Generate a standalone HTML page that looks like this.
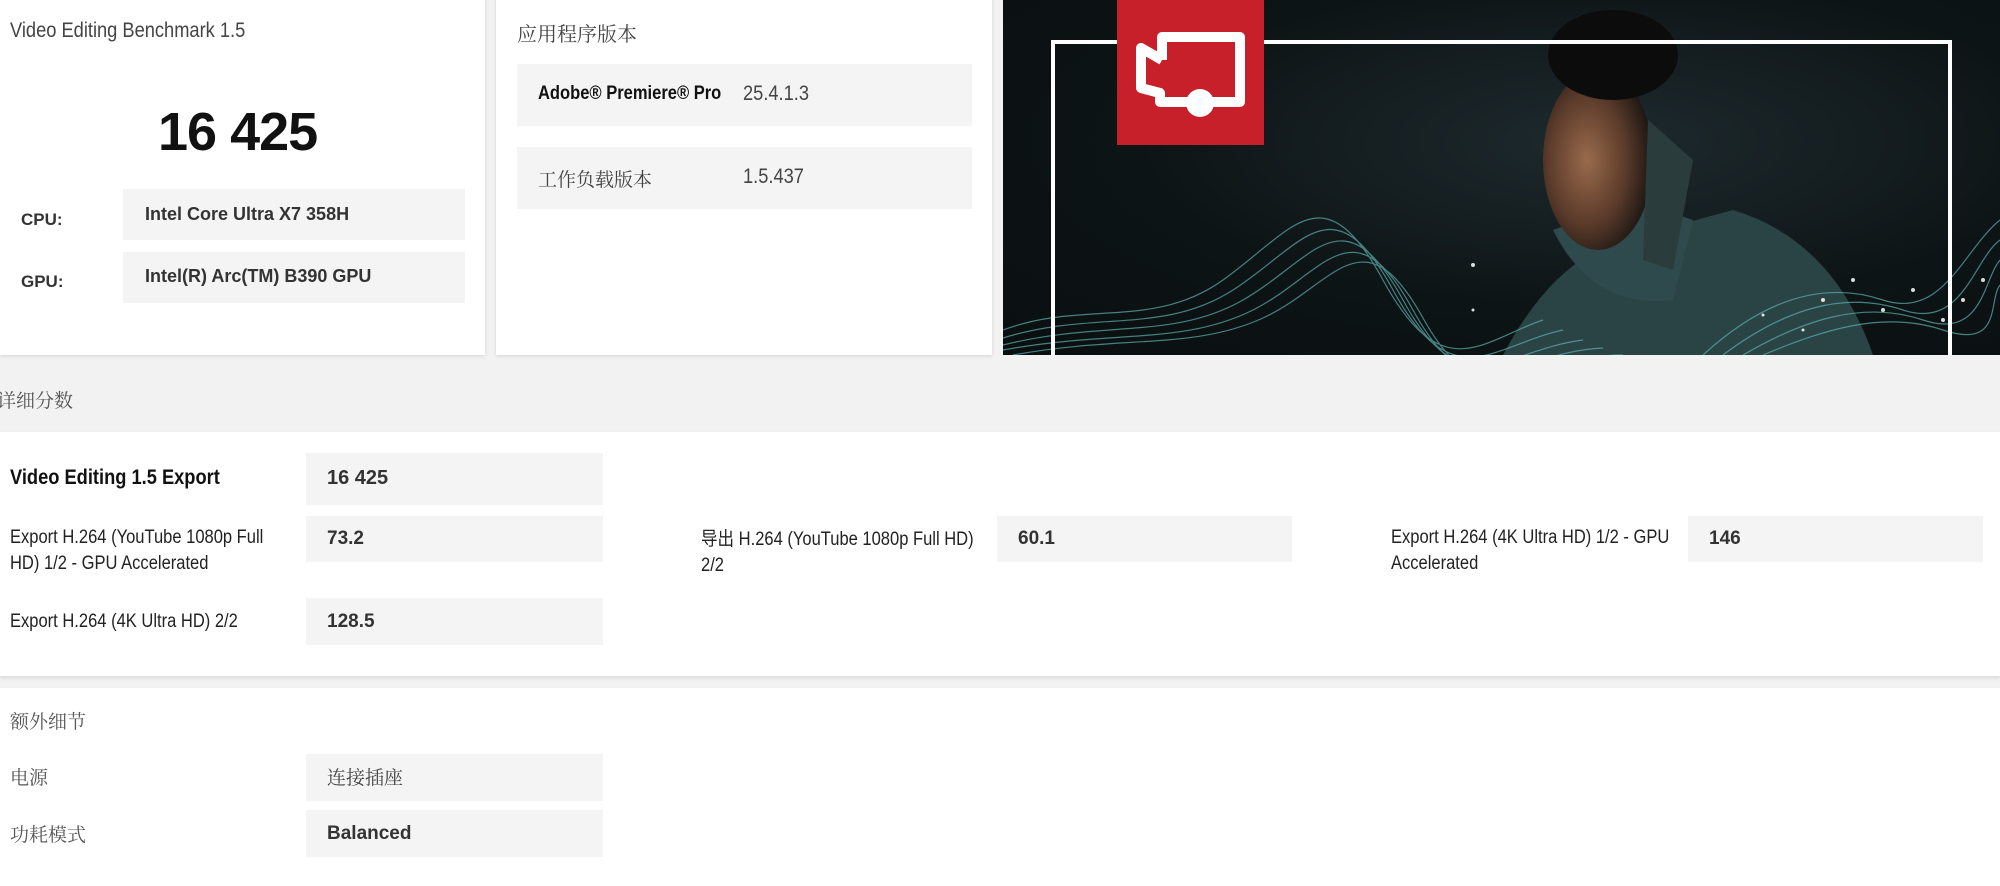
<!DOCTYPE html>
<html><head><meta charset="utf-8"><style>
*{margin:0;padding:0;box-sizing:border-box}
body{width:2000px;height:886px;overflow:hidden;background:#f2f2f2;font-family:"Liberation Sans","Noto Sans CJK SC",sans-serif;color:#222;position:relative}
.abs{position:absolute}
.card{position:absolute;background:#fff;box-shadow:0 1px 4px rgba(0,0,0,.12)}
.box{position:absolute;background:#f4f4f4}
.t{position:absolute;white-space:nowrap}
.n{transform:scaleX(0.87);transform-origin:0 0}
.lbl{font-size:19px;color:#222;line-height:26px}
.val{font-family:"Liberation Sans",sans-serif;font-weight:bold;font-size:19px;color:#333}
.cjk{font-family:"Noto Serif CJK SC","Noto Sans CJK SC",serif;font-size:19px;color:#444}
</style></head><body>
<div class="card" style="left:0;top:-4px;width:485px;height:359px"></div>
<div class="t n" style="left:10px;top:19px;font-size:21px;color:#444">Video Editing Benchmark 1.5</div>
<div class="t" style="left:158px;top:101px;font-family:'Liberation Sans',sans-serif;font-weight:bold;font-size:54px;color:#111;letter-spacing:-1px">16 425</div>
<div class="t" style="left:21px;top:210px;font-weight:bold;font-size:17px;color:#333">CPU:</div>
<div class="box" style="left:123px;top:189px;width:342px;height:51px"></div>
<div class="t val" style="left:145px;top:204px;font-size:18px">Intel Core Ultra X7 358H</div>
<div class="t" style="left:21px;top:272px;font-weight:bold;font-size:17px;color:#333">GPU:</div>
<div class="box" style="left:123px;top:252px;width:342px;height:51px"></div>
<div class="t val" style="left:145px;top:266px;font-size:18px">Intel(R) Arc(TM) B390 GPU</div>

<div class="card" style="left:496px;top:-4px;width:496px;height:359px"></div>
<div class="t cjk" style="left:517px;top:18px;font-size:20px">应用程序版本</div>
<div class="box" style="left:517px;top:64px;width:455px;height:62px"></div>
<div class="t n" style="left:538px;top:83px;font-weight:bold;font-size:19px;color:#111">Adobe® Premiere® Pro</div>
<div class="t n" style="left:743px;top:82px;font-size:21px;color:#444">25.4.1.3</div>
<div class="box" style="left:517px;top:147px;width:455px;height:62px"></div>
<div class="t cjk" style="left:538px;top:165px">工作负载版本</div>
<div class="t n" style="left:743px;top:165px;font-size:21px;color:#444">1.5.437</div>

<div class="abs" style="left:1003px;top:0;width:997px;height:355px;background:radial-gradient(ellipse at 60% 40%,#1e2a2e 0%,#0d1416 55%,#0a0f11 100%);overflow:hidden">
<svg width="997" height="355" style="position:absolute;left:0;top:0">
<defs><radialGradient id="f" cx="0.4" cy="0.5" r="0.6"><stop offset="0" stop-color="#9a6a4c"/><stop offset="0.6" stop-color="#5a3a2a"/><stop offset="1" stop-color="#1a1512"/></radialGradient></defs>
<path d="M500 355 Q550 260 620 240 L730 210 Q830 240 870 355Z" fill="#2a4446"/>
<path d="M550 230 Q590 310 670 300 L690 220 L630 200Z" fill="#2f4a4c"/>
<ellipse cx="595" cy="160" rx="55" ry="90" fill="url(#f)"/>
<ellipse cx="610" cy="55" rx="65" ry="45" fill="#0c0c0c"/>
<path d="M645 120 L690 160 L670 270 L640 260Z" fill="#2a3c3c"/>
<g fill="none" stroke="#5fb0b0" stroke-width="1.2" opacity="0.7">
<path d="M0 330 C80 300 150 330 220 280 S320 170 380 280 S480 340 540 320"/>
<path d="M0 338 C90 310 160 335 230 290 S330 180 390 290 S490 345 560 330"/>
<path d="M0 345 C100 320 170 340 240 300 S340 190 400 300 S500 350 580 340"/>
<path d="M0 350 C110 330 180 345 250 310 S350 200 410 310 S510 352 600 348"/>
<path d="M10 355 C120 335 190 350 260 318 S360 210 420 318 S520 355 620 355"/>
<path d="M700 355 C760 300 820 280 880 300 S960 250 997 220"/>
<path d="M720 355 C780 310 840 290 900 310 S970 260 997 240"/>
<path d="M740 355 C800 320 860 300 920 320 S980 280 997 260"/>
<path d="M760 355 C820 330 880 310 940 330 S985 300 997 285"/>
</g>
<g fill="#fff" opacity="0.85"><circle cx="820" cy="300" r="2"/><circle cx="850" cy="280" r="2"/><circle cx="880" cy="310" r="2"/><circle cx="910" cy="290" r="2"/><circle cx="940" cy="320" r="2"/><circle cx="960" cy="300" r="2"/><circle cx="980" cy="280" r="2"/><circle cx="800" cy="330" r="1.5"/><circle cx="760" cy="315" r="1.5"/><circle cx="470" cy="265" r="2"/><circle cx="470" cy="310" r="1.5"/></g>
<path d="M50 355 V42 H947 V355" fill="none" stroke="#fff" stroke-width="4"/>
<rect x="114" y="0" width="147" height="145" fill="#c8202a"/>
<g fill="none" stroke="#fff" stroke-width="10" stroke-linejoin="round">
<path d="M159 60 V37 H237 V102 H205"/>
<path d="M159 60 L138 48 V88 L157 93 V102 H185"/>
</g>
<circle cx="197" cy="103" r="14" fill="#fff"/>
</svg></div>

<div class="t cjk" style="left:-3px;top:386px;color:#555">详细分数</div>
<div class="abs" style="left:0;top:432px;width:2000px;height:244px;background:#fff;box-shadow:0 2px 4px rgba(0,0,0,.1)"></div>
<div class="t n" style="left:10px;top:466px;font-weight:bold;font-size:21px;color:#111">Video Editing 1.5 Export</div>
<div class="box" style="left:306px;top:453px;width:297px;height:52px"></div>
<div class="t val" style="left:327px;top:467px;font-size:20px">16 425</div>

<div class="t lbl n" style="left:10px;top:525px">Export H.264 (YouTube 1080p Full<br>HD) 1/2 - GPU Accelerated</div>
<div class="box" style="left:306px;top:516px;width:297px;height:46px"></div>
<div class="t val" style="left:327px;top:528px">73.2</div>
<div class="t lbl n" style="left:701px;top:525px"><span style="font-family:'Noto Sans CJK SC',sans-serif">导出</span> H.264 (YouTube 1080p Full HD)<br>2/2</div>
<div class="box" style="left:997px;top:516px;width:295px;height:46px"></div>
<div class="t val" style="left:1018px;top:528px">60.1</div>
<div class="t lbl n" style="left:1391px;top:525px">Export H.264 (4K Ultra HD) 1/2 - GPU<br>Accelerated</div>
<div class="box" style="left:1688px;top:516px;width:295px;height:46px"></div>
<div class="t val" style="left:1709px;top:528px">146</div>

<div class="t lbl n" style="left:10px;top:609px">Export H.264 (4K Ultra HD) 2/2</div>
<div class="box" style="left:306px;top:598px;width:297px;height:47px"></div>
<div class="t val" style="left:327px;top:611px">128.5</div>

<div class="abs" style="left:0;top:688px;width:2000px;height:198px;background:#fff"></div>
<div class="t cjk" style="left:10px;top:707px;color:#555">额外细节</div>
<div class="t cjk" style="left:10px;top:763px;color:#555">电源</div>
<div class="box" style="left:306px;top:754px;width:297px;height:47px"></div>
<div class="t cjk" style="left:327px;top:763px">连接插座</div>
<div class="t cjk" style="left:10px;top:820px;color:#555">功耗模式</div>
<div class="box" style="left:306px;top:810px;width:297px;height:47px"></div>
<div class="t val" style="left:327px;top:823px">Balanced</div>
</body></html>
